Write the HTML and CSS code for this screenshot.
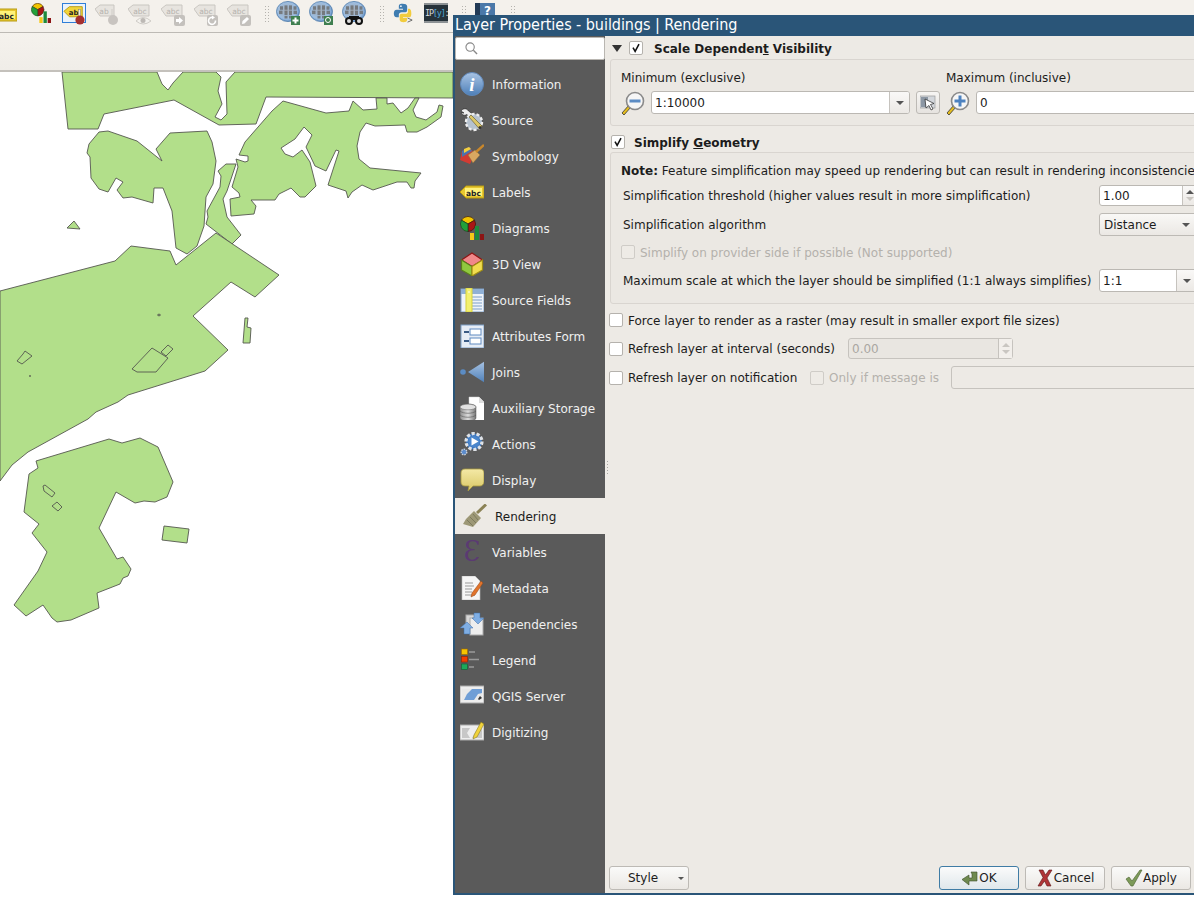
FILE: index.html
```html
<!DOCTYPE html>
<html lang="en">
<head>
<meta charset="utf-8">
<title>Layer Properties - buildings | Rendering</title>
<link rel="stylesheet" href="styles.css">
</head>
<body>
<svg class="defs" width="0" height="0" aria-hidden="true">
  <defs>
    <linearGradient id="gBlue" x1="0" y1="0" x2="0" y2="1"><stop offset="0" stop-color="#a9c4e4"/><stop offset="1" stop-color="#4d7fb8"/></linearGradient>
    <linearGradient id="gYellow" x1="0" y1="0" x2="0" y2="1"><stop offset="0" stop-color="#fff07a"/><stop offset="1" stop-color="#e8c21e"/></linearGradient>
    <linearGradient id="gBubble" x1="0" y1="0" x2="0" y2="1"><stop offset="0" stop-color="#f4e9a6"/><stop offset="1" stop-color="#d9c765"/></linearGradient>
    <linearGradient id="gDb" x1="0" y1="0" x2="1" y2="0"><stop offset="0" stop-color="#8f8f8f"/><stop offset=".5" stop-color="#dcdcdc"/><stop offset="1" stop-color="#777"/></linearGradient>
    <radialGradient id="gGlobe" cx=".45" cy=".45" r=".6"><stop offset="0" stop-color="#a3adb8"/><stop offset=".7" stop-color="#9dbde0"/><stop offset="1" stop-color="#4f80b8"/></radialGradient>

    <symbol id="i-labels" viewBox="0 0 24 24"><path d="M0 12 6 6H24V18H6Z" fill="#e8c830" stroke="#b79a10"/><rect x="5" y="8" width="17" height="8" fill="#fff27a"/><text x="13.5" y="15.5" class="t-abc">abc</text></symbol>
    <symbol id="i-diagrams" viewBox="0 0 24 24"><path d="M8 8 1.500 4.200A7.500 7.500 0 0 1 14.500 4.200Z" fill="#f2c500" stroke="#3a1a10" stroke-width=".7"/><path d="M8 8 14.500 4.200A7.500 7.500 0 0 1 8 15.500Z" fill="#a81616" stroke="#3a1a10" stroke-width=".7"/><path d="M8 8V15.500A7.500 7.500 0 0 1 1.500 4.200Z" fill="#23a03a" stroke="#1d4020" stroke-width=".7"/><rect x="10" y="17" width="4" height="7" fill="#f6c818"/><rect x="15" y="10" width="4" height="14" fill="#1e8a3c"/><rect x="20" y="18" width="4" height="6" fill="#8c1414"/></symbol>
    <symbol id="i-pin" viewBox="0 0 24 24"><path d="M1 9 7 4H21V15H7Z" fill="#f1d43a" stroke="#b79a10"/><text x="11.500" y="13" class="t-abc">ab</text><rect x="17" y="7" width="2" height="9" fill="#eee" stroke="#777" stroke-width=".5"/><circle cx="18.500" cy="18.500" r="5" fill="#a62f2f"/></symbol>
    <symbol id="i-gpin" viewBox="0 0 24 24"><path d="M0 6 5 2H19V13H5Z" fill="#e7e4df" stroke="#c9c6c1"/><text x="9" y="10.500" class="t-grey">ab</text><rect x="16" y="6" width="2" height="9" fill="#dbd8d3"/><circle cx="18" cy="17" r="5" fill="#c8c4c0"/></symbol>
    <symbol id="i-geye" viewBox="0 0 24 24"><path d="M0 6 5 2H21V13H5Z" fill="#e7e4df" stroke="#c9c6c1"/><text x="12" y="10.500" class="t-grey">abc</text><path d="M8 18Q15 11 23 18Q15 24 8 18Z" fill="#f4f2ee" stroke="#cfccc7"/><circle cx="15" cy="17.500" r="2.500" fill="#bdb9b5"/></symbol>
    <symbol id="i-garrow" viewBox="0 0 24 24"><path d="M0 6 5 2H21V13H5Z" fill="#e7e4df" stroke="#c9c6c1"/><text x="12" y="10.500" class="t-grey">abc</text><rect x="13" y="12" width="11" height="11" rx="2" fill="#c4c1bd"/><path d="M15 16H18V14L22 17.500 18 21V19H15Z" fill="#fff"/></symbol>
    <symbol id="i-grot" viewBox="0 0 24 24"><path d="M0 6 5 2H21V13H5Z" fill="#e7e4df" stroke="#c9c6c1"/><text x="12" y="10.500" class="t-grey">abc</text><rect x="13" y="12" width="11" height="11" rx="2" fill="#c4c1bd"/><path d="M21.500 17.500A3.500 3.500 0 1 1 19 14.500" fill="none" stroke="#fff" stroke-width="1.600"/><path d="M18 12.500 21 14.500 18 16.500Z" fill="#fff"/></symbol>
    <symbol id="i-gedit" viewBox="0 0 24 24"><path d="M0 6 5 2H21V13H5Z" fill="#e7e4df" stroke="#c9c6c1"/><text x="12" y="10.500" class="t-grey">abc</text><rect x="13" y="12" width="11" height="11" rx="2" fill="#c4c1bd"/><path d="M15 21 15.500 18 20 14 22 16 17.500 20.500Z" fill="#fff"/></symbol>
    <symbol id="globe" viewBox="0 0 24 24" preserveAspectRatio="none"><circle cx="12" cy="12" r="11.500" fill="url(#gGlobe)" stroke="#4a78aa" stroke-width=".8"/><g fill="#5f5a54" opacity=".65"><rect x="4" y="6" width="3" height="4"/><rect x="8.500" y="5" width="3" height="5"/><rect x="13" y="5" width="3" height="5"/><rect x="17.500" y="6" width="3" height="4"/><rect x="3" y="11" width="3.500" height="4"/><rect x="8.500" y="11" width="3" height="5"/><rect x="13" y="11" width="3" height="5"/><rect x="17.500" y="11" width="3.500" height="4"/><rect x="8.500" y="17" width="3" height="3"/><rect x="13" y="17" width="3" height="3"/></g></symbol>
    <symbol id="i-python" viewBox="0 0 24 24"><path d="M11.500 1C7 1 7 3 7 4.500V7H12V8H4.500C2 8 1 10 1 12.500S2 17 4.500 17H7V14C7 12 8.500 11 10.500 11H15C16.500 11 17 10 17 8.500V4C17 2 14.500 1 11.500 1Z" fill="#3f7cb0"/><circle cx="9.500" cy="3.800" r="1" fill="#fff"/><path d="M18 7V10C18 12.500 16.500 13 15 13H10.500C9 13 8 14 8 15.500V20C8 22 10.500 23 12.500 23 15 23 17 22 17 20V18H12V17H19.500C21.500 17 22 15 22 12.500S21.500 7 19 7Z" fill="#f2cc3e"/><path d="M17.500 18 23 20.500 17.500 23" fill="none" stroke="#444" stroke-width=".9"/></symbol>
    <symbol id="i-info" viewBox="0 0 24 24"><circle cx="12" cy="12" r="11.500" fill="url(#gBlue)" stroke="#5f87b8"/><text x="12" y="19" class="t-i">i</text></symbol>
    <symbol id="i-source" viewBox="0 0 24 24"><path d="M1 3C3 0 7 0 8.500 3L14 7 12 10 6.500 6.500C5 8 2 7 1 5L4 5Z" fill="#eee" stroke="#222" stroke-width=".6"/><circle cx="14" cy="14" r="8" fill="#b6c2cf" stroke="#eee" stroke-width="2.400" stroke-dasharray="3 2"/><path d="M9 9 11 7 22 18 19.500 21Z" fill="#dcc768" stroke="#5d5326" stroke-width=".6"/><circle cx="20" cy="19.500" r="1.500" fill="#333"/></symbol>
    <symbol id="i-symbology" viewBox="0 0 24 24"><path d="M2 7 9 3 15 10 10 20 0 16Z" fill="#d23b32"/><path d="M2 7 9 3 12 7 2 13Z" fill="#4c73ad"/><path d="M4 5 9 3 11 5 4 9Z" fill="#f2cf3e"/><path d="M8 11 15 6 20 11 13 19Z" fill="#d9a761" stroke="#8a6a35" stroke-width=".5"/><path d="M16 8 24 1" stroke="#c9872b" stroke-width="2.400"/></symbol>
    <symbol id="i-cube" viewBox="0 0 24 24"><path d="M12 1 22.500 8 12 14.500 1.500 8Z" fill="#f0888a" stroke="#8e1515" stroke-width="1.200"/><path d="M1.500 8 12 14.500V24L1.500 18Z" fill="#90c93f" stroke="#5a7f1b" stroke-width="1.200"/><path d="M22.500 8 12 14.500V24L22.500 18Z" fill="#f1dd4f" stroke="#a08e14" stroke-width="1.200"/></symbol>
    <symbol id="i-fields" viewBox="0 0 24 24"><rect x="1" y="1" width="23" height="23" fill="#eef3f9" stroke="#7c9fc8"/><rect x="1" y="1" width="23" height="5" fill="#8fb0d6"/><path d="M11 9H22M11 12H22M11 15H22M11 18H22M11 21H22" stroke="#7c9fc8"/><rect x="6" y="0" width="6" height="24" fill="#f3f06e" stroke="#d8d23c"/><circle cx="9" cy="4" r=".8" fill="#fff"/></symbol>
    <symbol id="i-form" viewBox="0 0 24 24"><rect x="1" y="1" width="23" height="23" fill="#e6edf6" stroke="#7c9fc8"/><rect x="10" y="5" width="11" height="6" fill="#fff" stroke="#5e8ac0"/><rect x="10" y="14" width="11" height="6" fill="#fff" stroke="#5e8ac0"/><path d="M4 8H9M4 17H9" stroke="#3a5b85" stroke-width="2"/></symbol>
    <symbol id="i-joins" viewBox="0 0 24 24"><circle cx="3" cy="12" r="2.800" fill="#5b8cc4"/><path d="M8 12 25 1V23Z" fill="url(#gBlue)"/></symbol>
    <symbol id="i-aux" viewBox="0 0 24 24"><path d="M9 1H19L25 7V25H9Z" fill="#fff" stroke="#ccc" stroke-width=".5"/><path d="M19 1V7H25" fill="#ddd"/><path d="M0 11C0 7 16 7 16 11V22C16 26 0 26 0 22Z" fill="url(#gDb)" stroke="#555" stroke-width=".5"/><ellipse cx="8" cy="11" rx="8" ry="2.800" fill="#e2e2e2" stroke="#666" stroke-width=".5"/><path d="M0 15C3 18 13 18 16 15M0 19C3 22 13 22 16 19" fill="none" stroke="#555" stroke-width=".6"/></symbol>
    <symbol id="i-actions" viewBox="0 0 24 24"><circle cx="14" cy="9.500" r="8" fill="#3f79c0" stroke="#dfe3e8" stroke-width="3.200" stroke-dasharray="3.200 1.800"/><circle cx="14" cy="9.500" r="5.500" fill="#4a86cc"/><path d="M11.500 5.500 18.500 9.500 11.500 13.500Z" fill="#fff"/><circle cx="4" cy="20" r="2.800" fill="#5c8ccc" stroke="#ccd2da" stroke-width="1.400" stroke-dasharray="1.500 1"/></symbol>
    <symbol id="i-display" viewBox="0 0 24 24"><path d="M5 1H20C23 1 24 3 24 5V14C24 16 22 18 20 18H13L8 23 9 18H5C2 18 1 16 1 14V5C1 3 2 1 5 1Z" fill="url(#gBubble)" stroke="#a89a3d" stroke-width=".8"/></symbol>
    <symbol id="i-rendering" viewBox="0 0 24 24"><path d="M3 15 11 7 18 14 10 23 0 20Z" fill="#9d9876"/><path d="M4 16 10 22M7 13 13 19M10 10 15 16" stroke="#7d7a5c"/><path d="M14 9 23 0.500" stroke="#8b8255" stroke-width="3"/></symbol>
    <symbol id="i-vars" viewBox="0 0 24 24"><text x="12" y="21" class="t-eps">Ɛ</text></symbol>
    <symbol id="i-meta" viewBox="0 0 24 24"><path d="M2 0H15L20 5V24H2Z" fill="#f6f6f6" stroke="#bbb" stroke-width=".6"/><path d="M5 7H13M5 10H14M5 13H12M5 16H12M5 19H15" stroke="#999"/><path d="M12 17 21 5 23 7 15 19 11 21Z" fill="#e2742c" stroke="#8e4414" stroke-width=".5"/></symbol>
    <symbol id="i-deps" viewBox="0 0 24 24"><rect x="6" y="3" width="13" height="18" fill="#d8d8d8" stroke="#aaa"/><rect x="10" y="6" width="13" height="17" fill="#eee" stroke="#aaa"/><path d="M14 1H20V6H24L18 12 12 6H14Z" fill="#7faee4" stroke="#3e6ca8" stroke-width=".5"/><path d="M7 10 13 16H10V22H4V16H0Z" fill="#7faee4" stroke="#3e6ca8" stroke-width=".5"/></symbol>
    <symbol id="i-legend" viewBox="0 0 24 24"><rect x="1.500" y="1" width="6" height="5.500" fill="#f5c400" stroke="#a06a00" stroke-width=".6"/><rect x="1.500" y="8.500" width="6" height="5.500" fill="#f03c00" stroke="#8e2200" stroke-width=".6"/><rect x="1.500" y="16" width="6" height="5.500" fill="#1ca85a" stroke="#0f5c30" stroke-width=".6"/><path d="M9 4H15M9 11.500H19M9 19H14" stroke="#9a9a9a" stroke-width="1.600"/></symbol>
    <symbol id="i-server" viewBox="0 0 24 24"><rect x="0" y="2" width="24" height="17" fill="#eee" stroke="#aaa"/><path d="M2 5H22V16H2Z" fill="#6f9ed6"/><path d="M2 5H12L7 10 4 16H2ZM14 16 18 10 22 9V16Z" fill="#e9e9e9"/><path d="M18 15 20 12 22 14 19 16Z" fill="#333"/></symbol>
    <symbol id="i-digit" viewBox="0 0 24 24"><rect x="0" y="5" width="24" height="15" fill="#eee" stroke="#aaa"/><path d="M2 8H10L7 13 10 18H2ZM12 18 16 11 22 9V18Z" fill="#c7c7c7"/><path d="M14 15 21 2 24 4 17 17 13 19Z" fill="#f0d33c" stroke="#7c6c14" stroke-width=".5"/></symbol>
    <symbol id="i-zoomout" viewBox="0 0 24 24"><path d="M8 14 1 22 3 24 10 16Z" fill="#e6bd1e" stroke="#333" stroke-width=".8"/><circle cx="14" cy="10" r="8.500" fill="#f6f6f6" stroke="#8a8a8a" stroke-width="1.600"/><rect x="8.500" y="8.500" width="11" height="3" fill="#5c8cc4"/></symbol>
    <symbol id="i-zoomin" viewBox="0 0 24 24"><path d="M8 14 1 22 3 24 10 16Z" fill="#e6bd1e" stroke="#333" stroke-width=".8"/><circle cx="14" cy="10" r="8.500" fill="#f6f6f6" stroke="#8a8a8a" stroke-width="1.600"/><path d="M8.500 8.500H12.500V4.500H15.500V8.500H19.500V11.500H15.500V15.500H12.500V11.500H8.500Z" fill="#4d82c0"/></symbol>
    <symbol id="i-canvas" viewBox="0 0 16 16"><rect x="0" y="1" width="15" height="12" fill="#d3d7dc" stroke="#9a9a9a" stroke-width=".7"/><rect x="1" y="2" width="7" height="10" fill="#8c97a4"/><path d="M5 4 14 8.500 10.500 9.500 13 14 11 15 9 10.500 6 13Z" fill="#fff" stroke="#222" stroke-width=".7"/></symbol>
    <symbol id="i-check" viewBox="0 0 14 14"><path d="M3.500 6.500 6 11 10.500 2.500" fill="none" stroke="#111" stroke-width="1.800"/></symbol>
    <symbol id="i-ok" viewBox="0 0 18 18"><path d="M10 1H16V10H8V14L1 8.500 8 4V7H11V3Z" fill="#6f8a50" stroke="#3c4e2a" stroke-width=".6" transform="translate(0 2)"/></symbol>
    <symbol id="i-x" viewBox="0 0 18 18"><path d="M3 1H7L9.500 6 13 1H16L11 9 15 17H11L8.500 12 5 17H2L7 8.500Z" fill="#b03538" stroke="#5a1414" stroke-width=".6"/></symbol>
    <symbol id="i-tick" viewBox="0 0 18 18"><path d="M1 10 4 8 7 12 15 1H17L8 17H6Z" fill="#7d9a58" stroke="#48602e" stroke-width=".6"/></symbol>
  </defs>
</svg>

<header class="toolbar">
  <svg class="tool tool-cut"><use href="#i-labels"/></svg>
  <svg class="tool tool-dia"><use href="#i-diagrams"/></svg>
  <span class="tool tool-active"><svg class="tool-in"><use href="#i-pin"/></svg></span>
  <svg class="tool"><use href="#i-gpin"/></svg>
  <svg class="tool"><use href="#i-geye"/></svg>
  <svg class="tool"><use href="#i-garrow"/></svg>
  <svg class="tool"><use href="#i-grot"/></svg>
  <svg class="tool"><use href="#i-gedit"/></svg>
  <span class="handle"></span>
  <svg class="tool tool-globe" viewBox="0 0 24 24"><use href="#globe" width="24" height="21"/><rect x="15" y="15" width="9" height="9" fill="#3f7f50"/><path d="M18.500 16.500H20.500V18.500H22.500V20.500H20.500V22.500H18.500V20.500H16.500V18.500H18.500Z" fill="#fff"/></svg>
  <svg class="tool tool-globe" viewBox="0 0 24 24"><use href="#globe" width="24" height="21"/><rect x="15" y="15" width="9" height="9" fill="#3f7f50"/><circle cx="19" cy="19" r="2.500" fill="none" stroke="#fff"/></svg>
  <svg class="tool tool-globe" viewBox="0 0 24 24"><use href="#globe" width="24" height="21"/><circle cx="7" cy="20" r="4" fill="#111"/><circle cx="17" cy="20" r="4" fill="#111"/><rect x="7" y="15" width="10" height="4" fill="#111"/><circle cx="7" cy="20" r="2" fill="#ddd"/><circle cx="17" cy="20" r="2" fill="#ddd"/></svg>
  <span class="handle"></span>
  <svg class="tool tool-py"><use href="#i-python"/></svg>
  <span class="tool ipy">IP<b>[y]</b>:</span>
  <span class="handle"></span>
  <span class="tool help">?</span>
  <span class="handle"></span>
</header>
<div class="toolbar2"></div>

<main class="map">
  <svg class="map-svg" viewBox="0 73 453 826" width="453" height="826">
    <g class="parcel">
      <path d="M62 73 68 130H98L104 115 174 101 219 126 256 125 266 98 453 99V73H235L226 83 227 115 221 121 215 118 222 105 218 92 221 78 216 73H183L173 84 168 91 162 85 157 73Z"/>
      <path d="M283 102 326 114 349 112 353 102 363 111 377 110 376 99H387L387 105 393 104 401 114 408 109 415 99H419L413 111 416 118 426 121 437 113 439 106 443 107 441 118 427 128 417 133H407L405 126 375 127 366 124 360 133 357 147 359 160 370 169 421 174 415 182 414 189H411L407 183 397 183 373 191 362 186 352 193 348 199 346 192 328 186 339 152 336 151 326 172 315 167 306 148 312 136 304 128 295 140 281 149 285 155 293 158 302 151 310 163 316 187 305 198H300L291 189 279 195 275 201 251 201 256 207 254 215 231 217 230 200 240 198 239 194 232 188 238 168 236 160 245 163 248 162V157L239 156 245 143 272 112Z"/>
      <path d="M108 132 137 142 162 162 156 150 170 134 207 132 212 143 216 162 213 185 206 198 204 227 197 247 187 255 176 249 172 212 163 189H154L153 204 132 198 123 199 117 191 123 183 116 179 108 193 99 190 91 179 90 158 87 154 89 145 99 133Z"/>
      <path d="M226 165H236L227 192 223 200 227 218 241 236 232 245 206 225 208 218 207 212 220 188 221 177 218 172Z"/>
      <path d="M74 222 80 230 67 229Z"/>
      <path d="M0 292 115 262 131 247 170 252 176 266 216 234 279 276 255 298 231 283 193 317 228 351 205 372 128 396 118 403 96 413 88 420 28 453 12 466 0 482Z"/>
      <path d="M36 462 109 440 122 444 140 439 158 448 173 483 167 498 155 503 144 502 135 504 116 493 99 529 117 560 123 558 131 570 128 577 123 579 120 585 97 594 99 609 71 621 57 623 52 619 43 606 26 617 14 606 38 572 47 553 32 534 39 525 24 513 29 475 38 469Z"/>
      <path d="M164 527 189 530 187 544 162 541Z"/>
      <path d="M245 319H248L247 328 251 329 250 344 243 344Z"/>
      <path d="M17 362 23 355 25 352 32 357 22 365Z"/>
      <path d="M152 349 168 359 156 373H137L132 370Z"/>
      <path d="M161 353 168 346 173 350 166 357Z"/>
      <path d="M43 487 45 486 55 494 52 498 44 492Z"/>
      <path d="M52 507 57 503 62 508 58 512Z"/>
      <circle cx="30" cy="377" r=".6"/>
      <ellipse cx="159" cy="316" rx="1.500" ry=".8"/>
    </g>
  </svg>
</main>

<section class="dialog">
  <h1 class="titlebar">Layer Properties - buildings | Rendering</h1>
  <div class="dialog-body">
    <nav class="sidebar">
      <div class="search"><svg class="search-icon" viewBox="0 0 14 14"><circle cx="5.500" cy="5.500" r="4.500" fill="none" stroke="#888" stroke-width="1.200"/><path d="M9 9 13 13" stroke="#888" stroke-width="1.500"/></svg></div>
      <ul class="nav">
        <li class="nav-item"><svg class="nav-icon"><use href="#i-info"/></svg>Information</li>
        <li class="nav-item"><svg class="nav-icon"><use href="#i-source"/></svg>Source</li>
        <li class="nav-item"><svg class="nav-icon"><use href="#i-symbology"/></svg>Symbology</li>
        <li class="nav-item"><svg class="nav-icon"><use href="#i-labels"/></svg>Labels</li>
        <li class="nav-item"><svg class="nav-icon"><use href="#i-diagrams"/></svg>Diagrams</li>
        <li class="nav-item"><svg class="nav-icon"><use href="#i-cube"/></svg>3D View</li>
        <li class="nav-item"><svg class="nav-icon"><use href="#i-fields"/></svg>Source Fields</li>
        <li class="nav-item"><svg class="nav-icon"><use href="#i-form"/></svg>Attributes Form</li>
        <li class="nav-item"><svg class="nav-icon"><use href="#i-joins"/></svg>Joins</li>
        <li class="nav-item"><svg class="nav-icon"><use href="#i-aux"/></svg>Auxiliary Storage</li>
        <li class="nav-item"><svg class="nav-icon"><use href="#i-actions"/></svg>Actions</li>
        <li class="nav-item"><svg class="nav-icon"><use href="#i-display"/></svg>Display</li>
        <li class="nav-item nav-current"><svg class="nav-icon"><use href="#i-rendering"/></svg>Rendering</li>
        <li class="nav-item"><svg class="nav-icon"><use href="#i-vars"/></svg>Variables</li>
        <li class="nav-item"><svg class="nav-icon"><use href="#i-meta"/></svg>Metadata</li>
        <li class="nav-item"><svg class="nav-icon"><use href="#i-deps"/></svg>Dependencies</li>
        <li class="nav-item"><svg class="nav-icon"><use href="#i-legend"/></svg>Legend</li>
        <li class="nav-item"><svg class="nav-icon"><use href="#i-server"/></svg>QGIS Server</li>
        <li class="nav-item"><svg class="nav-icon"><use href="#i-digit"/></svg>Digitizing</li>
      </ul>
    </nav>

    <div class="panel">
      <div class="panel-scroll">
        <div class="group-head head-scale">
          <span class="collapse"></span>
          <span class="cb"><svg class="cb-mark"><use href="#i-check"/></svg></span>
          <strong class="head-text head-text-scale">Scale Dependen<u>t</u> Visibility</strong>
        </div>
        <div class="group group-scale">
          <div class="scale-col scale-min">
            <div class="scale-label">Minimum (exclusive)</div>
            <div class="scale-row">
              <svg class="zoom-icon"><use href="#i-zoomout"/></svg>
              <div class="combo combo-min"><span class="field-text">1:10000</span><span class="combo-btn"><i class="tri"></i></span></div>
              <span class="btn-canvas"><svg class="canvas-icon"><use href="#i-canvas"/></svg></span>
            </div>
          </div>
          <div class="scale-col">
            <div class="scale-label">Maximum (inclusive)</div>
            <div class="scale-row">
              <svg class="zoom-icon"><use href="#i-zoomin"/></svg>
              <div class="combo combo-max"><span class="field-text">0</span></div>
            </div>
          </div>
        </div>

        <div class="group-head head-simplify">
          <span class="cb"><svg class="cb-mark"><use href="#i-check"/></svg></span>
          <strong class="head-text">Simplify <u>G</u>eometry</strong>
        </div>
        <div class="group group-simplify">
          <p class="note"><b>Note:</b> Feature simplification may speed up rendering but can result in rendering inconsistencies</p>
          <div class="form-row row-thresh">
            <span class="form-label">Simplification threshold (higher values result in more simplification)</span>
            <div class="spin"><span class="field-text">1.00</span><span class="spin-btn"><i class="tri-up"></i><i class="tri-down tri-faint"></i></span></div>
          </div>
          <div class="form-row row-algo">
            <span class="form-label">Simplification algorithm</span>
            <div class="select">Distance<i class="tri"></i></div>
          </div>
          <div class="check-row row-provider disabled"><span class="cb cb-off"></span><span class="lbl">Simplify on provider side if possible (Not supported)</span></div>
          <div class="form-row row-max">
            <span class="form-label">Maximum scale at which the layer should be simplified (1:1 always simplifies)</span>
            <div class="combo combo-simp"><span class="field-text">1:1</span><span class="combo-btn"><i class="tri"></i></span></div>
          </div>
        </div>

        <div class="check-row row-raster"><span class="cb"></span><span class="lbl">Force layer to render as a raster (may result in smaller export file sizes)</span></div>
        <div class="check-row row-refresh"><span class="cb"></span><span class="refresh-label">Refresh layer at interval (seconds)</span>
          <div class="spin spin-off"><span class="field-text">0.00</span><span class="spin-btn"><i class="tri-up tri-faint"></i><i class="tri-down tri-faint"></i></span></div>
        </div>
        <div class="check-row row-notify"><span class="cb"></span><span class="notify-label">Refresh layer on notification</span>
          <span class="cb cb-off"></span><span class="only-label">Only if message is</span>
          <div class="msg-input"></div>
        </div>
      </div>

      <footer class="buttons">
        <span class="btn btn-style">Style<i class="tri"></i></span>
        <span class="btn-spacer"></span>
        <span class="btn btn-ok"><svg class="btn-icon"><use href="#i-ok"/></svg>OK</span>
        <span class="btn"><svg class="btn-icon"><use href="#i-x"/></svg>Cancel</span>
        <span class="btn"><svg class="btn-icon"><use href="#i-tick"/></svg>Apply</span>
      </footer>
    </div>
    <span class="splitter"></span>
  </div>
</section>
</body>
</html>
```

FILE: styles.css
```css
* { box-sizing: border-box; }
html, body { margin: 0; padding: 0; height: 100%; }
body {
  position: relative;
  width: 1194px;
  height: 899px;
  overflow: hidden;
  background: #fff;
  font: 12px "DejaVu Sans", sans-serif;
  color: #1c1c1c;
}
.defs { position: absolute; }
.t-abc { font: bold 7.5px "DejaVu Sans", sans-serif; fill: #222; text-anchor: middle; }
.t-grey { font: 7.5px "DejaVu Sans", sans-serif; fill: #b5b2ad; text-anchor: middle; }
.t-i { font: italic bold 19px "Liberation Serif", serif; fill: #fff; text-anchor: middle; }
.t-eps { font: 27px "DejaVu Serif", serif; fill: #5b3a72; text-anchor: middle; }

/* main window toolbars */
.toolbar {
  height: 33px;
  display: flex;
  align-items: flex-start;
  padding-top: 3px;
  background: #f4f1ec;
  border-bottom: 1px solid #bdbab5;
}
.tool { flex: none; width: 24px; height: 24px; margin-right: 9px; display: block; }
.tool-cut { margin-left: -7px; margin-right: 11px; }
.tool-dia { width: 20px; height: 20px; margin-left: 3px; margin-right: 11px; }
.tool-active { height: 20px; border: 1px solid #2f7ed8; background: #eaf2fb; }
.tool-in { display: block; width: 22px; height: 22px; margin-top: -1px; overflow: visible; }
.tool-globe { margin-top: -2px; }
.tool-py { height: 20px; }
.handle {
  flex: none;
  width: 5px;
  height: 18px;
  margin: 2px 7px 0 4px;
  background-image: radial-gradient(circle, #b5b3ae .8px, transparent 1px);
  background-size: 3px 3px;
}
.ipy {
  height: 20px;
  background: #26323a;
  border-top: 2px solid #8d9295;
  border-bottom: 2px solid #8d9295;
  color: #d8dcde;
  font: 8.500px/16px "DejaVu Sans Mono", monospace;
  letter-spacing: -1.200px;
  padding-left: 1px;
  white-space: nowrap;
}
.ipy b { color: #4ea8d8; font-weight: normal; }
.help {
  width: 20px;
  margin-left: 2px;
  margin-right: 11px;
  background: #4a78a8;
  border-left: 5px solid #223a55;
  color: #fff;
  font: bold 12px/16px "DejaVu Sans", sans-serif;
  text-align: center;
}
.toolbar2 {
  height: 39px;
  background: linear-gradient(#f5f2ed, #f0ede8);
  border-bottom: 2px solid #c4c1bc;
}
.map { height: 827px; background: #fff; }
.map-svg { display: block; }
.parcel { fill: #b2df8a; stroke: #55574f; stroke-width: .9; stroke-linejoin: round; }

/* dialog window */
.dialog {
  position: absolute;
  left: 453px;
  top: 15px;
  width: 741px;
  height: 880px;
  display: flex;
  flex-direction: column;
  background: #edeae5;
  border-left: 2px solid #2a5578;
  border-bottom: 2px solid #2a5578;
}
.titlebar {
  flex: none;
  height: 21px;
  margin: 0 0 0 -2px;
  padding-left: 2px;
  background: #2a5578;
  color: #fff;
  font: 400 16px/19px "DejaVu Sans Condensed", "DejaVu Sans", sans-serif;
  font-stretch: condensed;
  letter-spacing: -.05px;
  white-space: nowrap;
}
.dialog-body { flex: 1; display: flex; min-height: 0; position: relative; }

.sidebar { flex: none; width: 150px; background: #5a5a5a; color: #f0f0f0; }
.search {
  height: 23px;
  margin-top: 1px;
  padding: 4px 0 0 9px;
  background: #fff;
  border: 1px solid #b9b6b1;
  border-radius: 2px;
}
.search-icon { display: block; width: 13px; height: 13px; }
.nav { list-style: none; margin: 6px 0 0; padding: 0; }
.nav-item {
  height: 36px;
  display: flex;
  align-items: center;
  gap: 8px;
  padding: 2px 0 0 5px;
  white-space: nowrap;
}
.nav-icon { flex: none; width: 24px; height: 24px; margin-top: -2px; }
.nav-current { background: #edeae5; color: #1c1c1c; padding-left: 8px; }

.panel { flex: 1; min-width: 0; display: flex; flex-direction: column; }
.panel-scroll { flex: 1; overflow: hidden; padding-left: 4px; }
.group-head { display: flex; align-items: center; white-space: nowrap; }
.head-scale { height: 22px; margin-top: 1px; padding-left: 3px; }
.head-simplify { height: 19px; margin-top: 7px; padding: 0 0 1px 2px; }
.head-text { margin-left: 9px; padding-top: 2px; font-weight: 700; }
.head-text-scale { margin-left: 11px; }
.collapse {
  width: 0;
  height: 0;
  margin-right: 7px;
  border-left: 5.500px solid transparent;
  border-right: 5.500px solid transparent;
  border-top: 7px solid #333;
}
.cb {
  flex: none;
  display: block;
  width: 14px;
  height: 14px;
  background: #fff;
  border: 1px solid #b5b2ad;
  border-radius: 2px;
}
.cb-off { background: #eeebe6; border-color: #cfccc7; }
.cb-mark { display: block; width: 12px; height: 12px; }

.group {
  width: 620px;
  margin-left: 1px;
  border: 1px solid #d9d5d0;
  border-radius: 3px;
  background: #ebe8e3;
}
.group-scale { height: 67px; display: flex; padding: 10px 0 0 10px; }
.scale-col { flex: none; }
.scale-min { width: 325px; }
.scale-label { height: 16px; line-height: 16px; }
.scale-row { display: flex; align-items: center; gap: 6px; margin-top: 5px; height: 23px; }
.zoom-icon { flex: none; width: 24px; height: 24px; }
.combo {
  flex: none;
  height: 23px;
  display: flex;
  align-items: center;
  justify-content: space-between;
  background: #fff;
  border: 1px solid #bbb8b3;
  border-radius: 3px;
}
.combo-min { width: 259px; }
.combo-max { width: 240px; }
.combo-simp { width: 98px; height: 23px; }
.field-text { padding-left: 3px; }
.combo-btn {
  flex: none;
  width: 20px;
  height: 100%;
  display: flex;
  align-items: center;
  justify-content: center;
  background: linear-gradient(#f9f8f7, #ece9e5);
  border-left: 1px solid #c6c3be;
  border-radius: 0 2px 2px 0;
}
.tri { display: block; width: 0; height: 0; border-left: 4px solid transparent; border-right: 4px solid transparent; border-top: 4px solid #555; }
.tri-up, .tri-down { display: block; width: 0; height: 0; border-left: 4px solid transparent; border-right: 4px solid transparent; }
.tri-up { border-bottom: 4px solid #555; }
.tri-down { border-top: 4px solid #555; }
.tri-up.tri-faint { border-bottom-color: #c9c6c1; }
.tri-down.tri-faint { border-top-color: #c9c6c1; }
.btn-canvas {
  flex: none;
  width: 24px;
  height: 23px;
  display: flex;
  align-items: center;
  justify-content: center;
  background: linear-gradient(#f6f5f3, #e6e3df);
  border: 1px solid #bdbab5;
  border-radius: 3px;
}
.canvas-icon { width: 16px; height: 16px; }

.group-simplify { height: 152px; padding: 0 0 0 10px; position: relative; }
.note { margin: 10px 0 0; height: 16px; line-height: 16px; white-space: nowrap; }
.form-row { display: flex; align-items: center; padding-left: 2px; white-space: nowrap; }
.form-label { flex: none; }
.row-thresh { height: 21px; margin-top: 6px; }
.row-thresh .form-label { width: 476px; }
.row-algo { height: 23px; margin-top: 7px; }
.row-algo .form-label { width: 476px; }
.row-max { height: 23px; margin-top: 9px; }
.row-max .form-label { width: 476px; }
.spin {
  flex: none;
  width: 98px;
  height: 21px;
  display: flex;
  align-items: center;
  justify-content: space-between;
  background: #fff;
  border: 1px solid #bbb8b3;
  border-radius: 3px;
}
.spin-btn {
  flex: none;
  width: 14px;
  height: 100%;
  display: flex;
  flex-direction: column;
  align-items: center;
  justify-content: center;
  gap: 3px;
  background: linear-gradient(#f9f8f7, #ece9e5);
  border-left: 1px solid #c6c3be;
}
.select {
  flex: none;
  width: 100px;
  height: 23px;
  display: flex;
  align-items: center;
  justify-content: space-between;
  padding: 0 8px 0 4px;
  background: linear-gradient(#f9f8f6, #ebe8e4);
  border: 1px solid #bdbab5;
  border-radius: 3px;
}
.check-row { display: flex; align-items: center; white-space: nowrap; }
.check-row .cb { margin-right: 5px; }
.lbl { padding-top: 2px; }
.disabled { color: #b4b1ac; }
.row-provider { height: 16px; margin-top: 8px; }
.row-raster { height: 16px; margin-top: 8px; }
.row-refresh { height: 21px; margin-top: 10px; }
.refresh-label { width: 220px; flex: none; }
.spin-off {
  width: 165px;
  background: #e9e6e1;
  color: #aaa7a2;
  border-color: #c6c3be;
}
.spin-off .spin-btn { background: #f2efeb; }
.row-notify { height: 23px; margin-top: 7px; }
.notify-label { width: 182px; flex: none; }
.only-label { color: #b4b1ac; width: 122px; flex: none; }
.msg-input { flex: none; width: 260px; height: 23px; background: #edeae5; border: 1px solid #c6c3be; border-radius: 3px; }

.buttons {
  flex: none;
  display: flex;
  gap: 6px;
  height: 24px;
  padding: 0 3px 0 4px;
  margin-bottom: 3px;
}
.btn {
  flex: none;
  width: 80px;
  height: 24px;
  display: flex;
  align-items: center;
  justify-content: center;
  background: linear-gradient(#fafaf9, #ebe8e4);
  border: 1px solid #bdbab5;
  border-radius: 3px;
  white-space: nowrap;
}
.btn-spacer { flex: 1; }
.btn-style { justify-content: flex-start; padding: 0 4px 0 18px; }
.btn-style .tri { margin-left: auto; border-width: 3px 3px 0; }
.btn-ok { border-color: #3f7ca5; background: linear-gradient(#fbfbfb, #dfe7eb); }
.btn-icon { flex: none; width: 18px; height: 18px; }
.splitter {
  position: absolute;
  left: 151px;
  top: 424px;
  width: 3px;
  height: 15px;
  background-image: radial-gradient(circle, #a8a6a2 .7px, transparent .9px);
  background-size: 3px 3px;
}
```
